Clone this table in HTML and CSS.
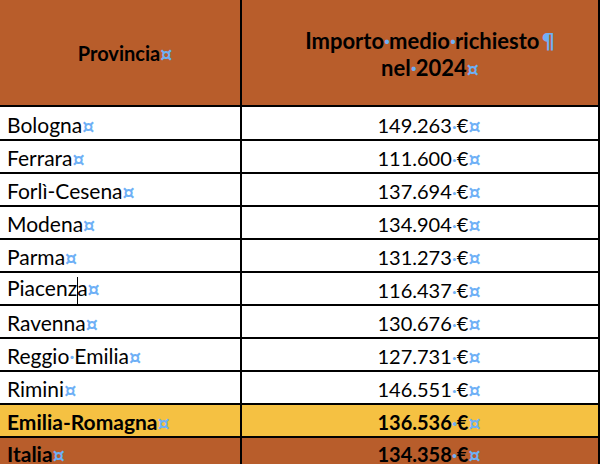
FILE: index.html
```html
<!DOCTYPE html>
<html lang="it">
<head>
<meta charset="utf-8">
<title>Importo medio richiesto</title>
<link rel="stylesheet" href="styles.css">
</head>
<body>
<table class="grid">
  <thead>
    <tr class="head">
      <th class="c1">Provincia<span class="mk">¤</span></th>
      <th class="c2">Importo<span class="sp">·</span>medio<span class="sp">·</span>richiesto<span class="mk pil">¶</span><br>nel<span class="sp">·</span>2024<span class="mk">¤</span></th>
    </tr>
  </thead>
  <tbody>
    <tr class="first"><td class="c1">Bologna<span class="mk">¤</span></td><td class="c2">149.263<span class="sp">·</span>€<span class="mk">¤</span></td></tr>
    <tr><td class="c1">Ferrara<span class="mk">¤</span></td><td class="c2">111.600<span class="sp">·</span>€<span class="mk">¤</span></td></tr>
    <tr><td class="c1">Forlì-Cesena<span class="mk">¤</span></td><td class="c2">137.694<span class="sp">·</span>€<span class="mk">¤</span></td></tr>
    <tr><td class="c1">Modena<span class="mk">¤</span></td><td class="c2">134.904<span class="sp">·</span>€<span class="mk">¤</span></td></tr>
    <tr><td class="c1">Parma<span class="mk">¤</span></td><td class="c2">131.273<span class="sp">·</span>€<span class="mk">¤</span></td></tr>
    <tr><td class="c1">Piacenz<span class="caret"></span>a<span class="mk">¤</span></td><td class="c2">116.437<span class="sp">·</span>€<span class="mk">¤</span></td></tr>
    <tr><td class="c1">Ravenna<span class="mk">¤</span></td><td class="c2">130.676<span class="sp">·</span>€<span class="mk">¤</span></td></tr>
    <tr><td class="c1">Reggio<span class="sp">·</span>Emilia<span class="mk">¤</span></td><td class="c2">127.731<span class="sp">·</span>€<span class="mk">¤</span></td></tr>
    <tr><td class="c1">Rimini<span class="mk">¤</span></td><td class="c2">146.551<span class="sp">·</span>€<span class="mk">¤</span></td></tr>
    <tr class="region"><td class="c1">Emilia-Romagna<span class="mk">¤</span></td><td class="c2">136.536<span class="sp">·</span>€<span class="mk">¤</span></td></tr>
    <tr class="nation"><td class="c1">Italia<span class="mk">¤</span></td><td class="c2">134.358<span class="sp">·</span>€<span class="mk">¤</span></td></tr>
  </tbody>
</table>
</body>
</html>
```

FILE: styles.css
```css
html, body {
  margin: 0;
  padding: 0;
  background: #ffffff;
}

body {
  font-family: Lato, "Open Sans", sans-serif;
  font-size: 20px;
  color: #000000;
}

.grid {
  border-collapse: separate;
  border-spacing: 0;
  width: 600px;
  table-layout: fixed;
}

.grid th,
.grid td {
  box-sizing: border-box;
  border-right: 2px solid #000000;
  border-bottom: 2px solid #000000;
  padding: 3px 0 0 0;
  vertical-align: middle;
  white-space: nowrap;
  line-height: 24px;
}

.grid .c1 {
  width: 242px;
  text-align: left;
  padding-left: 7px;
  font-size: 21px;
}

.grid .c2 {
  width: 358px;
  text-align: center;
  padding-left: 18px;
  font-size: 20px;
}

.head th {
  height: 107px;
  background: #b85d2b;
  font-weight: bold;
  line-height: 27px;
  padding-top: 2px;
}

.head th.c1 {
  text-align: center;
  padding-left: 10px;
  font-size: 20px;
}

.head th.c2 {
  font-size: 22px;
  padding-left: 20px;
}

.grid tbody tr td {
  height: 33px;
}

.grid tbody tr.first td {
  height: 34px;
}

.grid tbody tr.nation td {
  height: 28px;
  border-bottom: none;
}

.region td {
  background: #f5c142;
  font-weight: bold;
}

.nation td {
  background: #b85d2b;
  font-weight: bold;
}

.mk {
  color: #6eb0f6;
  font-family: "DejaVu Sans", sans-serif;
  font-weight: bold;
  font-size: 19px;
  line-height: 1;
}

.pil {
  font-size: 21px;
  margin-left: 2px;
}

.sp {
  color: #6eb0f6;
  display: inline-block;
  width: 5px;
  text-align: center;
}

.caret {
  display: inline-block;
  width: 1px;
  height: 27px;
  background: #000000;
  vertical-align: -8px;
  margin-right: -1px;
}
```
